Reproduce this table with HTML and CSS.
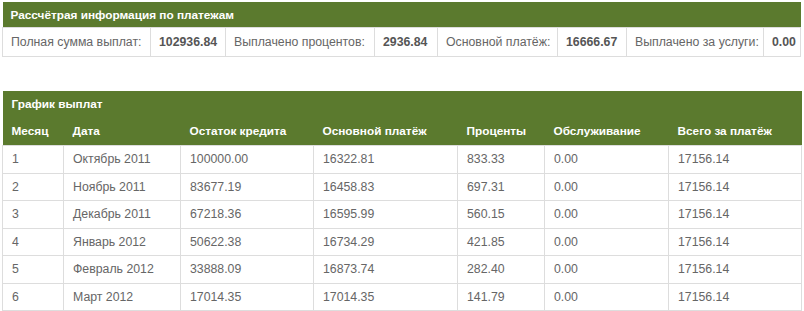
FILE: index.html
```html
<!DOCTYPE html>
<html lang="ru">
<head>
<meta charset="utf-8">
<link rel="stylesheet" href="styles.css">
</head>
<body>
<div class="page">
  <table class="summary">
    <colgroup>
      <col style="width:148px"><col style="width:75px"><col style="width:149px"><col style="width:63px">
      <col style="width:120px"><col style="width:69px"><col style="width:137px"><col style="width:37px">
    </colgroup>
    <tr class="title"><th colspan="8">Рассчётрая информация по платежам</th></tr>
    <tr class="info">
      <td>Полная сумма выплат:</td><td class="val">102936.84</td>
      <td>Выплачено процентов:</td><td class="val">2936.84</td>
      <td>Основной платёж:</td><td class="val">16666.67</td>
      <td>Выплачено за услуги:</td><td class="val">0.00</td>
    </tr>
  </table>

  <table class="schedule">
    <colgroup>
      <col style="width:61px"><col style="width:117px"><col style="width:133px"><col style="width:144px">
      <col style="width:87px"><col style="width:124px"><col style="width:133px">
    </colgroup>
    <tr class="title"><th colspan="7">График выплат</th></tr>
    <tr class="head">
      <th>Месяц</th><th>Дата</th><th>Остаток кредита</th><th>Основной платёж</th><th>Проценты</th><th>Обслуживание</th><th>Всего за платёж</th>
    </tr>
    <tr><td>1</td><td>Октябрь 2011</td><td>100000.00</td><td>16322.81</td><td>833.33</td><td>0.00</td><td>17156.14</td></tr>
    <tr><td>2</td><td>Ноябрь 2011</td><td>83677.19</td><td>16458.83</td><td>697.31</td><td>0.00</td><td>17156.14</td></tr>
    <tr><td>3</td><td>Декабрь 2011</td><td>67218.36</td><td>16595.99</td><td>560.15</td><td>0.00</td><td>17156.14</td></tr>
    <tr><td>4</td><td>Январь 2012</td><td>50622.38</td><td>16734.29</td><td>421.85</td><td>0.00</td><td>17156.14</td></tr>
    <tr><td>5</td><td>Февраль 2012</td><td>33888.09</td><td>16873.74</td><td>282.40</td><td>0.00</td><td>17156.14</td></tr>
    <tr><td>6</td><td>Март 2012</td><td>17014.35</td><td>17014.35</td><td>141.79</td><td>0.00</td><td>17156.14</td></tr>
  </table>
</div>
</body>
</html>
```

FILE: styles.css
```css
html, body {
  margin: 0;
  padding: 0;
  background: #ffffff;
}
.page {
  padding: 2px;
  font-family: "Liberation Sans", Arial, sans-serif;
  font-size: 12.3px;
  color: #666666;
}
table {
  border-collapse: collapse;
  table-layout: fixed;
}
.summary {
  width: 798px;
}
.schedule {
  width: 799px;
  margin-top: 34px;
}
th {
  background: #5b7a2e;
  color: #ffffff;
  font-size: 11.8px;
  font-weight: bold;
  text-align: left;
  padding: 0 0 0 9px;
  white-space: nowrap;
}
.summary .title th {
  height: 25px;
  padding-left: 8px;
}
.schedule .title th {
  height: 26px;
}
.schedule .head th {
  height: 28px;
}
td {
  border: 1px solid #dddddd;
  padding: 0 0 0 8px;
  white-space: nowrap;
  overflow: hidden;
}
.summary td {
  height: 28px;
  color: #666666;
}
.summary td.val {
  font-weight: bold;
  color: #555555;
}
.schedule td {
  height: 26.5px;
  padding-left: 9px;
}
```
